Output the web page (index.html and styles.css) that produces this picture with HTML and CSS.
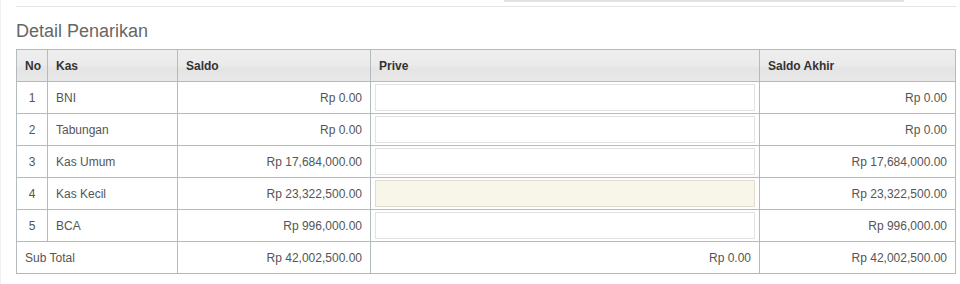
FILE: index.html
```html
<!DOCTYPE html>
<html lang="id">
<head>
<meta charset="utf-8">
<title>Detail Penarikan</title>
<link rel="stylesheet" href="styles.css">
</head>
<body>
<div class="page">
  <div class="prev-bar"></div>
  <div class="divider"></div>
  <h3 class="title">Detail Penarikan</h3>
  <table class="grid">
    <colgroup>
      <col class="c-no"><col class="c-kas"><col class="c-saldo"><col class="c-prive"><col class="c-akhir">
    </colgroup>
    <thead>
      <tr><th>No</th><th>Kas</th><th>Saldo</th><th>Prive</th><th>Saldo Akhir</th></tr>
    </thead>
    <tbody>
      <tr><td class="num">1</td><td>BNI</td><td class="r">Rp 0.00</td><td class="in"><input class="field" type="text"></td><td class="r">Rp 0.00</td></tr>
      <tr><td class="num">2</td><td>Tabungan</td><td class="r">Rp 0.00</td><td class="in"><input class="field" type="text"></td><td class="r">Rp 0.00</td></tr>
      <tr><td class="num">3</td><td>Kas Umum</td><td class="r">Rp 17,684,000.00</td><td class="in"><input class="field" type="text"></td><td class="r">Rp 17,684,000.00</td></tr>
      <tr><td class="num">4</td><td>Kas Kecil</td><td class="r">Rp 23,322,500.00</td><td class="in"><input class="field field-active" type="text"></td><td class="r">Rp 23,322,500.00</td></tr>
      <tr><td class="num">5</td><td>BCA</td><td class="r">Rp 996,000.00</td><td class="in"><input class="field" type="text"></td><td class="r">Rp 996,000.00</td></tr>
      <tr><td colspan="2">Sub Total</td><td class="r">Rp 42,002,500.00</td><td class="r">Rp 0.00</td><td class="r">Rp 42,002,500.00</td></tr>
    </tbody>
  </table>
</div>
</body>
</html>
```
FILE: styles.css
```css
html, body {
  margin: 0;
  padding: 0;
  background: #ffffff;
}
body {
  font-family: "Liberation Sans", Arial, sans-serif;
  color: #555555;
  border-left: 1px solid #f0f0f0;
  min-height: 284px;
  box-sizing: border-box;
}
.page {
  padding: 0 0 0 15px;
  width: 940px;
}
.prev-bar {
  margin-left: 488px;
  width: 400px;
  height: 2px;
  background: #e2e2e2;
}
.divider {
  margin-top: 4px;
  height: 1px;
  background: #e5e5e5;
}
.title {
  margin: 14px 0 8px 0;
  font-size: 18px;
  line-height: 20px;
  font-weight: normal;
  color: #666666;
}
.grid {
  border-collapse: collapse;
  table-layout: fixed;
  width: 939px;
  font-size: 12px;
  border: 1px solid #b4bbbf;
}
.c-no { width: 31px; }
.c-kas { width: 130px; }
.c-saldo { width: 193px; }
.c-prive { width: 389px; }
.c-akhir { width: 196px; }
.grid th, .grid td {
  border: 1px solid #b4bbbf;
  height: 32px;
  padding: 0 8px;
  box-sizing: border-box;
  vertical-align: middle;
  text-align: left;
}
.grid th {
  font-weight: bold;
  color: #333333;
  background: linear-gradient(to bottom, #eeeeee 0%, #ebebeb 45%, #e4e4e4 60%, #e9e9e9 100%);
}
.grid td.num { text-align: center; padding: 0; }
.grid td.r { text-align: right; }
.grid td.in { padding: 0 4px; }
.field {
  display: block;
  width: 100%;
  height: 27px;
  box-sizing: border-box;
  margin: 0;
  padding: 0 6px;
  border: 1px solid #e2e2e2;
  background: #ffffff;
  font-family: inherit;
  font-size: 12px;
  outline: none;
}
.field-active {
  background: #f8f6e8;
  border-color: #e0ddd0;
}
```
